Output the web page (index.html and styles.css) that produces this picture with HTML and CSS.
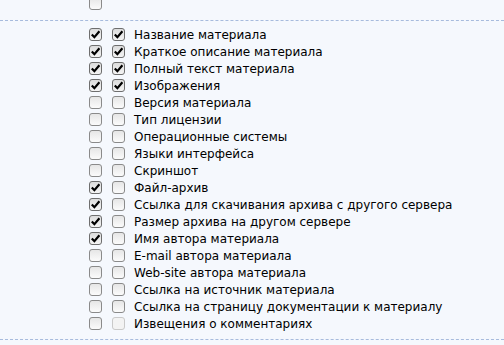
FILE: index.html
```html
<!DOCTYPE html>
<html lang="ru">
<head>
  <meta charset="UTF-8" />
  <title>Поля материала</title>
  <link rel="stylesheet" href="styles.css">
</head>
<body>

  <div class="top-row">
    <input type="checkbox" class="box">
  </div>

  <div class="fields">
    <label class="field"><input type="checkbox" class="box" checked><input type="checkbox" class="box" checked><span>Название материала</span></label>
    <label class="field"><input type="checkbox" class="box" checked><input type="checkbox" class="box" checked><span>Краткое описание материала</span></label>
    <label class="field"><input type="checkbox" class="box" checked><input type="checkbox" class="box" checked><span>Полный текст материала</span></label>
    <label class="field"><input type="checkbox" class="box" checked><input type="checkbox" class="box" checked><span>Изображения</span></label>
    <label class="field"><input type="checkbox" class="box"><input type="checkbox" class="box"><span>Версия материала</span></label>
    <label class="field"><input type="checkbox" class="box"><input type="checkbox" class="box"><span>Тип лицензии</span></label>
    <label class="field"><input type="checkbox" class="box"><input type="checkbox" class="box"><span>Операционные системы</span></label>
    <label class="field"><input type="checkbox" class="box"><input type="checkbox" class="box"><span>Языки интерфейса</span></label>
    <label class="field"><input type="checkbox" class="box"><input type="checkbox" class="box"><span>Скриншот</span></label>
    <label class="field"><input type="checkbox" class="box" checked><input type="checkbox" class="box"><span>Файл-архив</span></label>
    <label class="field"><input type="checkbox" class="box" checked><input type="checkbox" class="box"><span>Ссылка для скачивания архива с другого сервера</span></label>
    <label class="field"><input type="checkbox" class="box" checked><input type="checkbox" class="box"><span>Размер архива на другом сервере</span></label>
    <label class="field"><input type="checkbox" class="box" checked><input type="checkbox" class="box"><span>Имя автора материала</span></label>
    <label class="field"><input type="checkbox" class="box"><input type="checkbox" class="box"><span>E-mail автора материала</span></label>
    <label class="field"><input type="checkbox" class="box"><input type="checkbox" class="box"><span>Web-site автора материала</span></label>
    <label class="field"><input type="checkbox" class="box"><input type="checkbox" class="box"><span>Ссылка на источник материала</span></label>
    <label class="field"><input type="checkbox" class="box"><input type="checkbox" class="box"><span>Ссылка на страницу документации к материалу</span></label>
    <label class="field"><input type="checkbox" class="box"><input type="checkbox" class="box" disabled><span>Извещения о комментариях</span></label>
  </div>

</body>
</html>
```

FILE: styles.css
```css
* {
  box-sizing: border-box;
}

body {
  margin: 0;
  background: #f5f8fd;
  color: #000;
  font-family: 'DejaVu Sans', Verdana, sans-serif;
  font-size: 12px;
  overflow: hidden;
}

.top-row {
  height: 26px;
  margin-top: -5px;
  padding: 2px 0 0 89px;
  border-bottom: 1px dashed #a7bbdd;
}

.fields {
  padding: 5px 0 7px 89px;
  border-bottom: 1px dashed #a7bbdd;
}

.field {
  display: flex;
  align-items: center;
  height: 17px;
  white-space: nowrap;
}

.field span {
  margin-left: 9px;
  padding-top: 1px;
}

.box {
  appearance: none;
  -webkit-appearance: none;
  display: block;
  width: 13px;
  height: 13px;
  margin: 0;
  border: 1px solid #8a8a8a;
  border-radius: 3px;
  background: linear-gradient(#e6e6e6, #fbfbfb);
}

.box + .box {
  margin-left: 10px;
}

.box:checked {
  border-color: #6e6e6e;
  background:
    url("data:image/svg+xml,%3Csvg xmlns='http://www.w3.org/2000/svg' width='11' height='11'%3E%3Cpath d='M1.8 5.4L4.4 8.2L9.4 2.2' fill='none' stroke='%23000' stroke-width='2.2'/%3E%3C/svg%3E") center no-repeat,
    linear-gradient(#dcdcdc, #f4f4f4);
}

.box:disabled {
  border-color: #c9c9c9;
  background: #f3f3f3;
}
```
